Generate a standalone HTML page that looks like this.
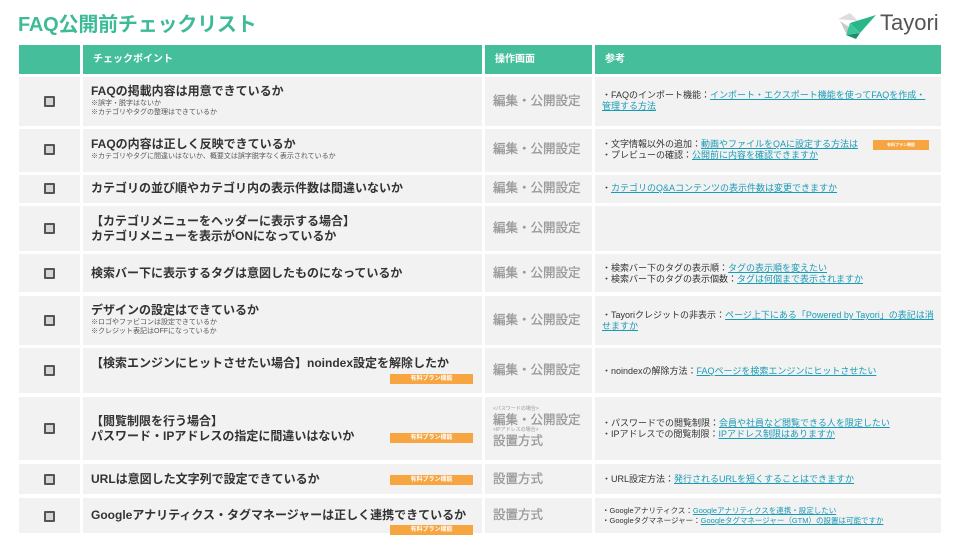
<!DOCTYPE html>
<html><head><meta charset="utf-8"><style>
*{margin:0;padding:0;box-sizing:border-box}
body{width:960px;height:540px;background:#fff;position:relative;overflow:hidden;font-family:"Liberation Sans","Noto Sans CJK JP",sans-serif;color:#333}
.t{position:absolute;left:18px;top:8px;font-size:20px;font-weight:bold;color:#3dbb97;letter-spacing:-0.2px}
.c{position:absolute;background:#f2f2f2}
.h{position:absolute;background:#45bf9b;color:#fff;font-size:10px;font-weight:bold;top:45px;height:29px;line-height:29px;padding-left:10px}
.cb{position:absolute;left:44px;width:11px;height:11px;border:2px solid #555;background:#d6d6d6;border-radius:1px}
.m{position:absolute;left:91px;font-size:12px;font-weight:bold;color:#333;line-height:15px;white-space:nowrap}
.m small{display:block;font-size:7px;font-weight:normal;line-height:9px;color:#555}
.o{position:absolute;left:493px;font-size:12.5px;font-weight:normal;color:#999;white-space:nowrap;line-height:15px;-webkit-text-stroke:0.3px #999}
.r{position:absolute;left:602px;font-size:9px;color:#333;line-height:11px;width:332px}
.r a{color:#1a9bb5;text-decoration:underline}
.b{position:absolute;background:#f7a541;color:#fff;font-size:6px;text-align:center;line-height:10px;height:10px;font-weight:bold}
.tiny{font-size:5px;font-weight:normal;color:#999;line-height:7px;display:block;-webkit-text-stroke:0}
</style></head><body>
<div class="t">FAQ公開前チェックリスト</div>
<svg style="position:absolute;left:836px;top:11px" width="42" height="28" viewBox="0 0 42 28">
<polygon points="2,8 14,2 22,10" fill="#ddd"/>
<polygon points="4,10 16,18 10,22" fill="#c9c9c9"/>
<polygon points="14,12 40,4 24,22" fill="#2bb58a"/>
<polygon points="10,24 24,22 20,28" fill="#1e8e6a"/>
<polygon points="14,12 24,22 10,24" fill="#3cc79a"/>
</svg>
<div style="position:absolute;left:880px;top:10px;font-size:22px;color:#555">Tayori</div>

<div class="h" style="left:19px;width:61px"></div>
<div class="h" style="left:83px;width:399px">チェックポイント</div>
<div class="h" style="left:485px;width:107px">操作画面</div>
<div class="h" style="left:595px;width:346px">参考</div>

<div class="c" style="left:19px;top:77px;width:61px;height:49px"></div><div class="c" style="left:83px;top:77px;width:399px;height:49px"></div><div class="c" style="left:485px;top:77px;width:107px;height:49px"></div><div class="c" style="left:595px;top:77px;width:346px;height:49px"></div>
<div class="c" style="left:19px;top:129px;width:61px;height:43px"></div><div class="c" style="left:83px;top:129px;width:399px;height:43px"></div><div class="c" style="left:485px;top:129px;width:107px;height:43px"></div><div class="c" style="left:595px;top:129px;width:346px;height:43px"></div>
<div class="c" style="left:19px;top:175px;width:61px;height:28px"></div><div class="c" style="left:83px;top:175px;width:399px;height:28px"></div><div class="c" style="left:485px;top:175px;width:107px;height:28px"></div><div class="c" style="left:595px;top:175px;width:346px;height:28px"></div>
<div class="c" style="left:19px;top:206px;width:61px;height:45px"></div><div class="c" style="left:83px;top:206px;width:399px;height:45px"></div><div class="c" style="left:485px;top:206px;width:107px;height:45px"></div><div class="c" style="left:595px;top:206px;width:346px;height:45px"></div>
<div class="c" style="left:19px;top:254px;width:61px;height:38px"></div><div class="c" style="left:83px;top:254px;width:399px;height:38px"></div><div class="c" style="left:485px;top:254px;width:107px;height:38px"></div><div class="c" style="left:595px;top:254px;width:346px;height:38px"></div>
<div class="c" style="left:19px;top:296px;width:61px;height:49px"></div><div class="c" style="left:83px;top:296px;width:399px;height:49px"></div><div class="c" style="left:485px;top:296px;width:107px;height:49px"></div><div class="c" style="left:595px;top:296px;width:346px;height:49px"></div>
<div class="c" style="left:19px;top:348px;width:61px;height:45px"></div><div class="c" style="left:83px;top:348px;width:399px;height:45px"></div><div class="c" style="left:485px;top:348px;width:107px;height:45px"></div><div class="c" style="left:595px;top:348px;width:346px;height:45px"></div>
<div class="c" style="left:19px;top:397px;width:61px;height:63px"></div><div class="c" style="left:83px;top:397px;width:399px;height:63px"></div><div class="c" style="left:485px;top:397px;width:107px;height:63px"></div><div class="c" style="left:595px;top:397px;width:346px;height:63px"></div>
<div class="c" style="left:19px;top:464px;width:61px;height:30px"></div><div class="c" style="left:83px;top:464px;width:399px;height:30px"></div><div class="c" style="left:485px;top:464px;width:107px;height:30px"></div><div class="c" style="left:595px;top:464px;width:346px;height:30px"></div>
<div class="c" style="left:19px;top:498px;width:61px;height:35px"></div><div class="c" style="left:83px;top:498px;width:399px;height:35px"></div><div class="c" style="left:485px;top:498px;width:107px;height:35px"></div><div class="c" style="left:595px;top:498px;width:346px;height:35px"></div>

<div class="cb" style="top:96px"></div>
<div class="cb" style="top:144px"></div>
<div class="cb" style="top:183px"></div>
<div class="cb" style="top:223px"></div>
<div class="cb" style="top:268px"></div>
<div class="cb" style="top:315px"></div>
<div class="cb" style="top:365px"></div>
<div class="cb" style="top:423px"></div>
<div class="cb" style="top:474px"></div>
<div class="cb" style="top:511px"></div>

<div class="m" style="top:84px">FAQの掲載内容は用意できているか<small>※誤字・脱字はないか</small><small>※カテゴリやタグの整理はできているか</small></div>
<div class="m" style="top:137px">FAQの内容は正しく反映できているか<small>※カテゴリやタグに間違いはないか、概要文は誤字脱字なく表示されているか</small></div>
<div class="m" style="top:181px">カテゴリの並び順やカテゴリ内の表示件数は間違いないか</div>
<div class="m" style="top:214px">【カテゴリメニューをヘッダーに表示する場合】<br>カテゴリメニューを表示がONになっているか</div>
<div class="m" style="top:266px">検索バー下に表示するタグは意図したものになっているか</div>
<div class="m" style="top:303px">デザインの設定はできているか<small>※ロゴやファビコンは設定できているか</small><small>※クレジット表記はOFFになっているか</small></div>
<div class="m" style="top:356px">【検索エンジンにヒットさせたい場合】noindex設定を解除したか</div>
<div class="m" style="top:414px">【閲覧制限を行う場合】<br>パスワード・IPアドレスの指定に間違いはないか</div>
<div class="m" style="top:472px">URLは意図した文字列で設定できているか</div>
<div class="m" style="top:508px">Googleアナリティクス・タグマネージャーは正しく連携できているか</div>

<div class="b" style="left:390px;top:374px;width:83px">有料プラン機能</div>
<div class="b" style="left:390px;top:433px;width:83px">有料プラン機能</div>
<div class="b" style="left:390px;top:475px;width:83px">有料プラン機能</div>
<div class="b" style="left:390px;top:525px;width:83px">有料プラン機能</div>

<div class="o" style="top:94px">編集・公開設定</div>
<div class="o" style="top:142px">編集・公開設定</div>
<div class="o" style="top:181px">編集・公開設定</div>
<div class="o" style="top:221px">編集・公開設定</div>
<div class="o" style="top:266px">編集・公開設定</div>
<div class="o" style="top:313px">編集・公開設定</div>
<div class="o" style="top:363px">編集・公開設定</div>
<div class="o" style="top:406px;line-height:14px"><span class="tiny">&lt;パスワードの場合&gt;</span>編集・公開設定<span class="tiny">&lt;IPアドレスの場合&gt;</span>設置方式</div>
<div class="o" style="top:472px">設置方式</div>
<div class="o" style="top:508px">設置方式</div>

<div class="r" style="top:90px">・FAQのインポート機能：<a>インポート・エクスポート機能を使ってFAQを作成・管理する方法</a></div>
<div class="r" style="top:139px">・文字情報以外の追加：<a>動画やファイルをQAに設定する方法は</a><br>・プレビューの確認：<a>公開前に内容を確認できますか</a></div>
<div class="b" style="left:873px;top:140px;width:56px;font-size:4px">有料プラン機能</div>
<div class="r" style="top:183px">・<a>カテゴリのQ&amp;Aコンテンツの表示件数は変更できますか</a></div>
<div class="r" style="top:263px">・検索バー下のタグの表示順：<a>タグの表示順を変えたい</a><br>・検索バー下のタグの表示個数：<a>タグは何個まで表示されますか</a></div>
<div class="r" style="top:310px">・Tayoriクレジットの非表示：<a>ページ上下にある「Powered by Tayori」の表記は消せますか</a></div>
<div class="r" style="top:366px">・noindexの解除方法：<a>FAQページを検索エンジンにヒットさせたい</a></div>
<div class="r" style="top:418px">・パスワードでの閲覧制限：<a>会員や社員など閲覧できる人を限定したい</a><br>・IPアドレスでの閲覧制限：<a>IPアドレス制限はありますか</a></div>
<div class="r" style="top:474px">・URL設定方法：<a>発行されるURLを短くすることはできますか</a></div>
<div class="r" style="top:506px;font-size:7.5px;line-height:10px">・Googleアナリティクス：<a>Googleアナリティクスを連携・設定したい</a><br>・Googleタグマネージャー：<a>Googleタグマネージャー（GTM）の設置は可能ですか</a></div>
</body></html>
